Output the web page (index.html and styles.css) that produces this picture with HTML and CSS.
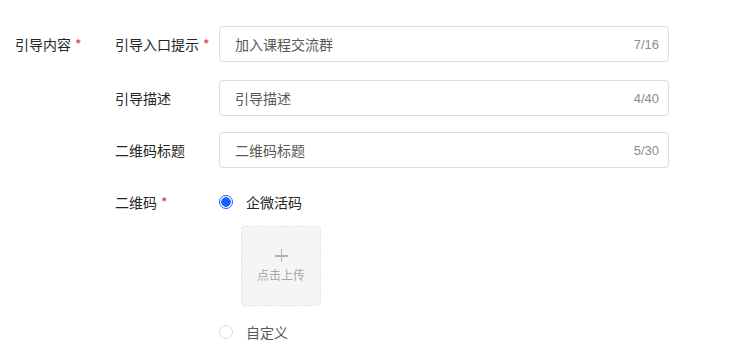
FILE: index.html
```html
<!DOCTYPE html>
<html lang="zh-CN">
<head>
<meta charset="utf-8">
<link rel="stylesheet" href="styles.css">
</head>
<body>
<div class="form">
  <div class="group-label">引导内容<span class="req">*</span></div>
  <div class="group-body">
    <div class="row row-1">
      <div class="label">引导入口提示<span class="req">*</span></div>
      <div class="input"><span class="value">加入课程交流群</span><span class="count">7/16</span></div>
    </div>
    <div class="row row-2">
      <div class="label">引导描述</div>
      <div class="input"><span class="value">引导描述</span><span class="count">4/40</span></div>
    </div>
    <div class="row row-3">
      <div class="label">二维码标题</div>
      <div class="input"><span class="value">二维码标题</span><span class="count">5/30</span></div>
    </div>
    <div class="row row-qr">
      <div class="label">二维码<span class="req">*</span></div>
      <div class="radios">
        <label class="radio checked"><span class="dot"></span><span class="radio-text">企微活码</span></label>
        <div class="upload">
          <span class="plus"></span>
          <span class="upload-text">点击上传</span>
        </div>
        <label class="radio"><span class="dot"></span><span class="radio-text muted">自定义</span></label>
      </div>
    </div>
  </div>
</div>
</body>
</html>
```
FILE: styles.css
```css
html, body {
  margin: 0;
  padding: 0;
  background: #fff;
}
body {
  font-family: "Noto Sans CJK SC", "Noto Sans", sans-serif;
  font-size: 14px;
  color: #262626;
}
.form {
  display: flex;
  padding: 26px 0 0 15px;
}
.group-label {
  width: 100px;
  flex: none;
  height: 36px;
  line-height: 36px;
}
.req {
  color: #f5222d;
  margin-left: 4px;
}
.group-body {
  display: flex;
  flex-direction: column;
}
.row {
  display: flex;
  align-items: center;
}
.row-1 { margin-bottom: 18px; }
.row-2 { margin-bottom: 16px; }
.row-3 { margin-bottom: 24px; }
.row-qr { align-items: flex-start; }
.label {
  width: 104px;
  flex: none;
  line-height: 20px;
}
.input {
  box-sizing: border-box;
  width: 450px;
  height: 36px;
  border: 1px solid #dcdee2;
  border-radius: 4px;
  display: flex;
  align-items: center;
  justify-content: space-between;
  padding: 0 9px 0 15px;
}
.value { color: #595959; }
.count {
  color: #8c8c8c;
  font-family: "Liberation Sans", sans-serif;
  font-size: 13px;
}
.radios {
  display: flex;
  flex-direction: column;
  align-items: flex-start;
}
.radio {
  display: flex;
  align-items: center;
  height: 20px;
}
.dot {
  box-sizing: border-box;
  width: 14px;
  height: 14px;
  border-radius: 50%;
  border: 1px solid #d9d9e3;
  margin-right: 13px;
  background: #fff;
}
.checked .dot {
  border-color: #1660ff;
  background: radial-gradient(circle, #1660ff 0 4.5px, #fff 5px);
}
.radio-text { color: #262626; }
.radio-text.muted { color: #595959; }
.upload {
  box-sizing: border-box;
  width: 80px;
  height: 80px;
  margin: 14px 0 16px 22px;
  background: #f5f5f5;
  border: 1px dashed #e3e3e3;
  border-radius: 4px;
  display: flex;
  flex-direction: column;
  align-items: center;
  justify-content: center;
  color: #a6a6a6;
}
.plus {
  position: relative;
  width: 13px;
  height: 13px;
}
.plus::before,
.plus::after {
  content: "";
  position: absolute;
  background: #b3b3b3;
}
.plus::before {
  left: 0;
  right: 0;
  top: 6px;
  height: 1.5px;
}
.plus::after {
  top: 0;
  bottom: 0;
  left: 6px;
  width: 1.5px;
}
.upload-text {
  font-size: 12px;
  line-height: 16px;
  margin-top: 5px;
}
```
